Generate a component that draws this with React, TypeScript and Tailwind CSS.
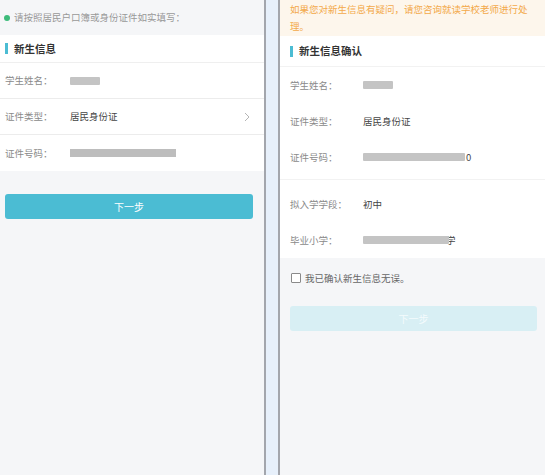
import React from 'react';

const font = { fontFamily: '"Noto Sans CJK SC", "Noto Sans", sans-serif' };

function Blur({ w, className = '' }: { w: string; className?: string }) {
  return <span className={`inline-block h-[8px] ${w} rounded-[1px] bg-[#c4c4c4] blur-[0.6px] ${className}`} />;
}

function LeftRow({ label, children, last }: { label: string; children: React.ReactNode; last?: boolean }) {
  return (
    <div className={`flex h-[36px] items-center pl-[5px] pr-[14px] ${last ? '' : 'border-b border-[#ececec]'}`}>
      <span className="w-[65px] text-[9.5px] text-[#8a8a8a]">{label}</span>
      <div className="flex flex-1 items-center text-[9.5px] text-[#444]">{children}</div>
    </div>
  );
}

function RightRow({ label, children }: { label: string; children: React.ReactNode }) {
  return (
    <div className="flex h-[36px] items-center pl-[10px]">
      <span className="w-[73px] text-[9.5px] text-[#8a8a8a]">{label}</span>
      <div className="flex items-center text-[9.5px] text-[#444]">{children}</div>
    </div>
  );
}

export default function App() {
  return (
    <div className="flex h-[475px] w-[545px] overflow-hidden bg-[#f5f6f8]" style={font}>
      {/* left: fill in */}
      <div className="flex w-[264px] shrink-0 flex-col">
        <div className="flex h-[35px] items-center gap-[4px] pl-[4px] text-[9.5px] text-[#999]">
          <span className="h-[6px] w-[6px] rounded-full bg-[#3dbb7a]" />
          <span>请按照居民户口簿或身份证件如实填写：</span>
        </div>
        <div className="bg-white">
          <div className="flex h-[28px] items-center gap-[6px] border-b border-[#efefef] pl-[5px]">
            <span className="h-[11px] w-[3px] bg-[#4bbcd3]" />
            <span className="text-[10.5px] font-bold text-[#333]">新生信息</span>
          </div>
          <LeftRow label="学生姓名：">
            <Blur w="w-[30px]" />
          </LeftRow>
          <LeftRow label="证件类型：">
            <span className="flex-1">居民身份证</span>
            <svg width="6" height="10" viewBox="0 0 6 10" fill="none" stroke="#b5b5b5" strokeWidth="1">
              <path d="M1 1l4 4-4 4" />
            </svg>
          </LeftRow>
          <LeftRow label="证件号码：" last>
            <span className="inline-block h-[8px] w-[106px] bg-[#bdbdbd]" />
          </LeftRow>
        </div>
        <button className="ml-[5px] mr-[11px] mt-[23px] h-[25px] rounded-[3px] bg-[#4bbcd3] text-[10px] text-white">
          下一步
        </button>
      </div>

      {/* divider */}
      <div className="w-[16px] shrink-0 border-x-2 border-[#a3a6ad] bg-[#e7f0fb]" />

      {/* right: confirm */}
      <div className="flex flex-1 flex-col">
        <div className="h-[36px] bg-[#fdf6ec] pl-[10px] pt-[1px] text-[9.5px] leading-[17px] text-[#f3a94a]">
          <p className="w-[238px]">如果您对新生信息有疑问，请您咨询就读学校老师进行处理。</p>
        </div>
        <div className="bg-white">
          <div className="flex h-[31px] items-center gap-[6px] border-b border-[#f2f2f2] pl-[10px]">
            <span className="h-[11px] w-[3px] bg-[#4bbcd3]" />
            <span className="text-[10.5px] font-bold text-[#333]">新生信息确认</span>
          </div>
          <div className="pb-[4px]">
            <RightRow label="学生姓名：">
              <Blur w="w-[30px]" />
            </RightRow>
            <RightRow label="证件类型：">居民身份证</RightRow>
            <RightRow label="证件号码：">
              <Blur w="w-[102px]" />
              <span className="ml-[1px]">0</span>
            </RightRow>
          </div>
          <div className="border-t border-[#f2f2f2] pt-[6px]">
            <RightRow label="拟入学学段：">初中</RightRow>
            <RightRow label="毕业小学：">
              <Blur w="w-[86px]" />
              <span className="-ml-[3px]">学</span>
            </RightRow>
          </div>
        </div>
        <label className="mt-[13px] flex items-center gap-[4px] pl-[11px] text-[9.5px] text-[#666]">
          <span className="h-[10px] w-[10px] rounded-[1px] border border-[#8a8a8a] bg-white" />
          <span>我已确认新生信息无误。</span>
        </label>
        <button className="ml-[10px] mr-[8px] mt-[21px] h-[25px] rounded-[3px] bg-[#d8eff4] text-[10px] text-[#f4fbfd]">
          下一步
        </button>
      </div>
    </div>
  );
}
